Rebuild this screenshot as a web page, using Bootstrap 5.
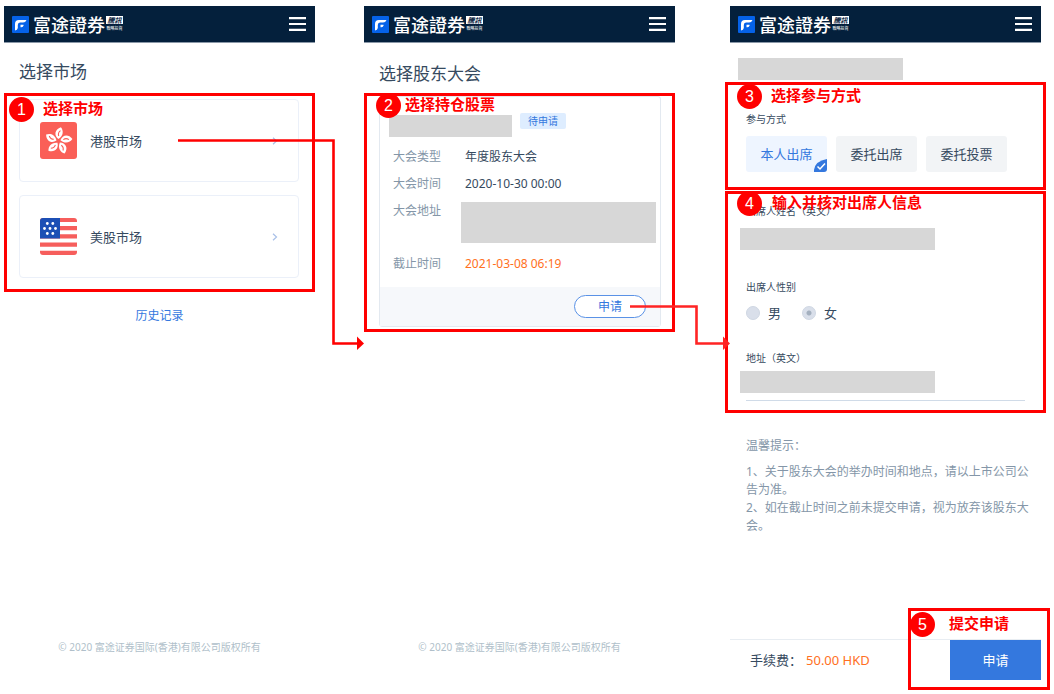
<!DOCTYPE html>
<html lang="zh-CN">
<head>
<meta charset="utf-8">
<meta name="viewport" content="width=device-width, initial-scale=1">
<title>富途證券 股东大会申请</title>
<link rel="stylesheet" href="https://cdn.jsdelivr.net/npm/bootstrap@5.3.0/dist/css/bootstrap.min.css">
<style>
  :root { --ink: #364a60; --soft: #8496a8; --blue: #3478de; --orange: #ff7022; --mark-red: #ff0000; }
  body { font-family: "Noto Sans", "Noto Sans CJK SC", sans-serif; font-size: 12px; line-height: 16px; color: var(--ink); background: #fff; }
  a { text-decoration: none; color: var(--blue); }
  .guide { padding: 6px 13px 14px 4px; }
  .screen { flex: 1 1 0; min-width: 0; }
  .screen-two { margin-left: 49px; }
  .screen-three { margin-left: 55px; }

  .top-bar { height: 37px; padding: 0 9px 0 8px; background: #04203c; border-bottom: 1px solid #8a98a8; }
  .brand-name { font: 500 18px/20px "Noto Sans CJK TC", sans-serif; color: #fff; margin-left: 4px; }
  .brand-side { margin-left: 1px; font-family: "Noto Sans CJK TC", sans-serif; font-weight: 700; text-align: center; }
  .brand-box { background: #fff; color: #04203c; font-size: 7px; line-height: 8px; width: 17px; font-style: italic; }
  .brand-sub { color: #fff; font-size: 4px; line-height: 8px; white-space: nowrap; font-weight: 400; }
  .menu-btn { border: 0; background: none; line-height: 0; }

  .page-title { font-size: 17px; line-height: 26px; font-weight: 400; margin: 0; height: 50px; padding: 16px 15px 0; }
  .screen-two .page-title { padding-top: 18px; }

  .market-list { padding: 6px 16px 14px 15px; gap: 13px; }
  .market { height: 83px; border: 1px solid #ebf0f9; border-radius: 4px; padding: 0 20px; color: var(--ink); font-size: 13px; }
  .market-name { margin-left: 13px; }

  .copy { font-size: 10px; color: #b0bfca; margin: 0 0 25px; }

  .meeting-wrap { padding: 3px 14px 5px 15px; }
  .meeting { border: 1px solid #e3e9f0; border-radius: 3px; }
  .meeting-body { padding: 16px 4px 15px 9px; }
  .hidden-block { background: #d7d7d7; }
  .state-tag { background: #deedff; color: var(--blue); font-size: 10px; line-height: 16px; width: 46px; border-radius: 2px; text-align: center; }
  .facts { display: grid; grid-template-columns: 67px 1fr; row-gap: 11px; margin: 12px 0 0; padding-left: 4px; }
  .facts dt { font-weight: 400; color: var(--soft); }
  .facts dd { margin: 0; padding-left: 5px; }
  .facts .place { padding: 0; }
  .place-block { height: 41px; margin: -1px 0 2px 1px; }
  .meeting-foot { background: #f6f8fb; padding: 8px 14px 8px 0; }
  .apply-pill { width: 72px; height: 23px; border: 1px solid #5a92e6; border-radius: 12px; background: #fff; color: var(--blue); font-size: 12px; line-height: 20px; padding: 0; }

  .redacted-title { width: 165px; height: 22px; margin: 15px 0 2px 8px; }
  .mode { height: 108px; padding: 29px 16px 0; margin-bottom: 1px; }
  .form-name { font-size: 10px; line-height: 16px; display: block; }
  .choices { gap: 9px; margin-top: 9px; }
  .choice { width: 81px; height: 36px; border: 0; border-radius: 3px; background: #f2f4f6; color: var(--ink); font-size: 13px; padding: 0; }
  .choice.on { background: #eef5ff; color: var(--blue); }
  .choice svg { right: 0; bottom: 0; }
  .person { height: 222px; padding: 12px 16px 0; }
  .masked { width: 195px; height: 22px; margin: 9px 0 0 -6px; background: #d7d7d7; border: 0; display: block; }
  .gender { border: 0; padding: 0; margin: 29px 0 0; }
  .gender-row { margin-top: 9px; }
  .gender label { font-size: 13px; line-height: 18px; margin-left: 8px; margin-right: 21px; }
  .gender input { appearance: none; width: 14px; height: 14px; margin: 0; border-radius: 50%; background: #d9dfea; border: 1px solid #cfd7e3; opacity: 1; }
  .gender input:checked { background: radial-gradient(circle, #a4b0bf 0 2px, #d9dfea 3px); }
  .address { margin-top: 28px; padding-bottom: 7px; border-bottom: 1px solid #d0dbe8; }
  .address .masked { margin-top: 5px; }

  .tips { padding: 24px 10px 0 16px; color: var(--soft); line-height: 18px; }
  .tips p { margin: 0 0 8px; }
  .pay-bar { height: 41px; border-top: 1px solid #e8edf2; font-size: 13px; padding-left: 20px; }
  .fee { color: var(--orange); }
  .pay-btn { width: 91px; height: 40px; border: 0; background: #3478de; color: #fff; font-size: 13px; }

  /* red walkthrough marks laid over the screens */
  .callout { inset: 0; border: 3px solid var(--mark-red); pointer-events: none; }
  .callout-wide { left: -5px; right: -5px; }
  .callout-pay { inset: -32px -9px -10px -42px; }
  .step { display: flex; align-items: center; gap: 9px; color: var(--mark-red); font-weight: 700; font-size: 15px; line-height: 20px; white-space: nowrap; position: absolute; left: 9px; top: -1px; }
  .step b { width: 25px; height: 25px; border-radius: 50%; background: var(--mark-red); color: #fff; font: 400 16px/25px "Liberation Sans", sans-serif; text-align: center; }
  .step span { padding-bottom: 3px; }
  .step-one { left: 2px; top: 1px; }
  .step-two { top: -3px; gap: 4px; }
  .step-four { top: -3px; gap: 10px; }
  .step-five { left: -1px; top: 1px; gap: 14px; }
  .route { z-index: 3; pointer-events: none; }
  .route-a { right: -49px; top: 45px; }
  .route-b { right: -55px; top: 211px; }
</style>
<script src="https://cdn.jsdelivr.net/npm/bootstrap@5.3.0/dist/js/bootstrap.bundle.min.js"></script>
</head>
<body>
<svg class="d-none" aria-hidden="true">
  <symbol id="logo" viewBox="0 0 17 17"><rect width="17" height="17" rx="1" fill="#0562e8"/><path d="M3 14.500V8Q3 4 7 4H14.500Q13.500 6.500 11 6.500H8Q5.800 6.500 5.800 9V12Q5.500 14 3 14.500Z" fill="#fff"/><path d="M8.500 8.800H11.500V9.500Q11.300 11.300 9.500 11.300H8.500Z" fill="#fff"/></symbol>
  <symbol id="bars" viewBox="0 0 17 14"><path d="M0 1.200H17M0 7H17M0 12.800H17" stroke="#fff" stroke-width="2.200"/></symbol>
  <symbol id="chev" viewBox="0 0 6 8"><path d="M1 .8 4.500 4 1 7.200" fill="none" stroke="#a9c0e8" stroke-width="1.200"/></symbol>
</svg>
<main class="guide d-flex min-vh-100">

  <section class="screen d-flex flex-column">
    <header class="top-bar d-flex align-items-center">
      <svg width="17" height="17"><use href="#logo"/></svg>
      <span class="brand-name">富途證券</span>
      <span class="brand-side"><span class="brand-box d-block">騰訊</span><span class="brand-sub d-block">戰略投資</span></span>
      <button class="menu-btn ms-auto p-0" type="button" aria-label="菜单"><svg width="17" height="14"><use href="#bars"/></svg></button>
    </header>
    <h1 class="page-title">选择市场</h1>
    <div class="market-list position-relative d-flex flex-column">
      <a class="market d-flex align-items-center" href="#hk">
        <svg width="37" height="37" viewBox="0 0 37 37">
          <rect width="37" height="37" rx="3" fill="#fa5f57"/>
          <defs><g id="petal"><path d="M18 17C13 14 13 8 19 5C22 8 23 13 18 17Z" fill="#fff"/><path d="M18 14Q16.500 11 19 8.500" stroke="#fa5f57" stroke-width="1.100" fill="none"/></g></defs>
          <g><use href="#petal" transform="rotate(8 18.500 19)"/><use href="#petal" transform="rotate(80 18.500 19)"/><use href="#petal" transform="rotate(152 18.500 19)"/><use href="#petal" transform="rotate(224 18.500 19)"/><use href="#petal" transform="rotate(296 18.500 19)"/></g>
        </svg>
        <span class="market-name">港股市场</span>
        <svg class="ms-auto" width="6" height="8"><use href="#chev"/></svg>
      </a>
      <a class="market d-flex align-items-center" href="#us">
        <svg width="37" height="37" viewBox="0 0 37 37">
          <clipPath id="round"><rect width="37" height="37" rx="3"/></clipPath>
          <g clip-path="url(#round)"><rect width="37" height="37" fill="#fff"/>
          <path d="M0 2H37M0 10.200H37M0 18.400H37M0 26.600H37M0 34.800H37" stroke="#f65e5c" stroke-width="4.200"/>
          <rect width="20" height="20.500" fill="#1c4fb5"/>
          <g fill="#fff"><circle cx="7.300" cy="5.500" r="1.400"/><circle cx="12.800" cy="5.500" r="1.400"/><circle cx="4.500" cy="10.500" r="1.400"/><circle cx="10" cy="10.500" r="1.400"/><circle cx="15.500" cy="10.500" r="1.400"/><circle cx="7.300" cy="15.500" r="1.400"/><circle cx="12.800" cy="15.500" r="1.400"/></g></g>
        </svg>
        <span class="market-name">美股市场</span>
        <svg class="ms-auto" width="6" height="8"><use href="#chev"/></svg>
      </a>
      <div class="callout position-absolute"><div class="step step-one"><b>1</b><span>选择市场</span></div></div>
      <svg class="route route-a position-absolute" width="186" height="212" viewBox="0 0 186 212"><path d="M0 2.500H155.500V205.500H180" fill="none" stroke="#f00" stroke-width="2.600"/><path d="M179 198.500 186 205.500 179 212Z" fill="#f00"/></svg>
    </div>
    <a class="mt-3 align-self-center" href="#history">历史记录</a>
    <p class="copy mt-auto text-center">© 2020 富途证券国际(香港)有限公司版权所有</p>
  </section>

  <section class="screen screen-two d-flex flex-column">
    <header class="top-bar d-flex align-items-center">
      <svg width="17" height="17"><use href="#logo"/></svg>
      <span class="brand-name">富途證券</span>
      <span class="brand-side"><span class="brand-box d-block">騰訊</span><span class="brand-sub d-block">戰略投資</span></span>
      <button class="menu-btn ms-auto p-0" type="button" aria-label="菜单"><svg width="17" height="14"><use href="#bars"/></svg></button>
    </header>
    <h1 class="page-title">选择股东大会</h1>
    <div class="meeting-wrap position-relative">
      <article class="meeting">
        <div class="meeting-body">
          <div class="d-flex align-items-start gap-2">
            <div class="hidden-block" style="width:123px;height:22px;margin-top:2px"></div>
            <span class="state-tag">待申请</span>
          </div>
          <dl class="facts">
            <dt>大会类型</dt><dd>年度股东大会</dd>
            <dt>大会时间</dt><dd>2020-10-30 00:00</dd>
            <dt>大会地址</dt><dd class="place"><div class="hidden-block place-block"></div></dd>
            <dt>截止时间</dt><dd class="fee">2021-03-08 06:19</dd>
          </dl>
        </div>
        <div class="meeting-foot d-flex justify-content-end"><button class="apply-pill" type="button">申请</button></div>
      </article>
      <div class="callout position-absolute"><div class="step step-two"><b>2</b><span>选择持仓股票</span></div></div>
      <svg class="route route-b position-absolute" width="100" height="46" viewBox="0 0 100 46"><path d="M0 2.500H66.500V39.500H94" fill="none" stroke="#ff2424" stroke-width="2.600"/><path d="M93 32.500 100 39.500 93 46Z" fill="#ff2424"/></svg>
    </div>
    <p class="copy mt-auto text-center">© 2020 富途证券国际(香港)有限公司版权所有</p>
  </section>

  <section class="screen screen-three d-flex flex-column">
    <header class="top-bar d-flex align-items-center">
      <svg width="17" height="17"><use href="#logo"/></svg>
      <span class="brand-name">富途證券</span>
      <span class="brand-side"><span class="brand-box d-block">騰訊</span><span class="brand-sub d-block">戰略投資</span></span>
      <button class="menu-btn ms-auto p-0" type="button" aria-label="菜单"><svg width="17" height="14"><use href="#bars"/></svg></button>
    </header>
    <div class="hidden-block redacted-title"></div>
    <div class="mode position-relative">
      <span class="form-name">参与方式</span>
      <div class="choices d-flex">
        <button class="choice on position-relative" type="button">本人出席<svg class="position-absolute" width="13" height="13" viewBox="0 0 13 13"><path d="M0 13V11Q1 2 13 0V10Q13 13 10 13Z" fill="#3478de"/><path d="M3.500 7.500 6 10 11 4.500" fill="none" stroke="#fff" stroke-width="1.500"/></svg></button>
        <button class="choice" type="button">委托出席</button>
        <button class="choice" type="button">委托投票</button>
      </div>
      <div class="callout callout-wide position-absolute"><div class="step"><b>3</b><span>选择参与方式</span></div></div>
    </div>
    <form class="person position-relative">
      <label class="form-name" for="who">出席人姓名（英文）</label>
      <input class="masked" id="who" type="text">
      <fieldset class="gender">
        <span class="form-name">出席人性别</span>
        <div class="gender-row d-flex align-items-center">
          <input type="radio" name="sex" id="male" disabled><label for="male">男</label>
          <input type="radio" name="sex" id="female" checked disabled><label for="female">女</label>
        </div>
      </fieldset>
      <div class="address">
        <label class="form-name" for="addr">地址（英文）</label>
        <input class="masked" id="addr" type="text">
      </div>
      <div class="callout callout-wide position-absolute"><div class="step step-four"><b>4</b><span>输入并核对出席人信息</span></div></div>
    </form>
    <div class="tips">
      <p>温馨提示：</p>
      <div>1、关于股东大会的举办时间和地点，请以上市公司公告为准。</div>
      <div>2、如在截止时间之前未提交申请，视为放弃该股东大会。</div>
    </div>
    <div class="pay-bar mt-auto d-flex align-items-center">
      <span>手续费：</span><span class="fee ms-1">50.00 HKD</span>
      <div class="position-relative ms-auto">
        <button class="pay-btn d-block" type="button">申请</button>
        <div class="callout callout-pay position-absolute"><div class="step step-five"><b>5</b><span>提交申请</span></div></div>
      </div>
    </div>
  </section>
</main>
</body>
</html>
